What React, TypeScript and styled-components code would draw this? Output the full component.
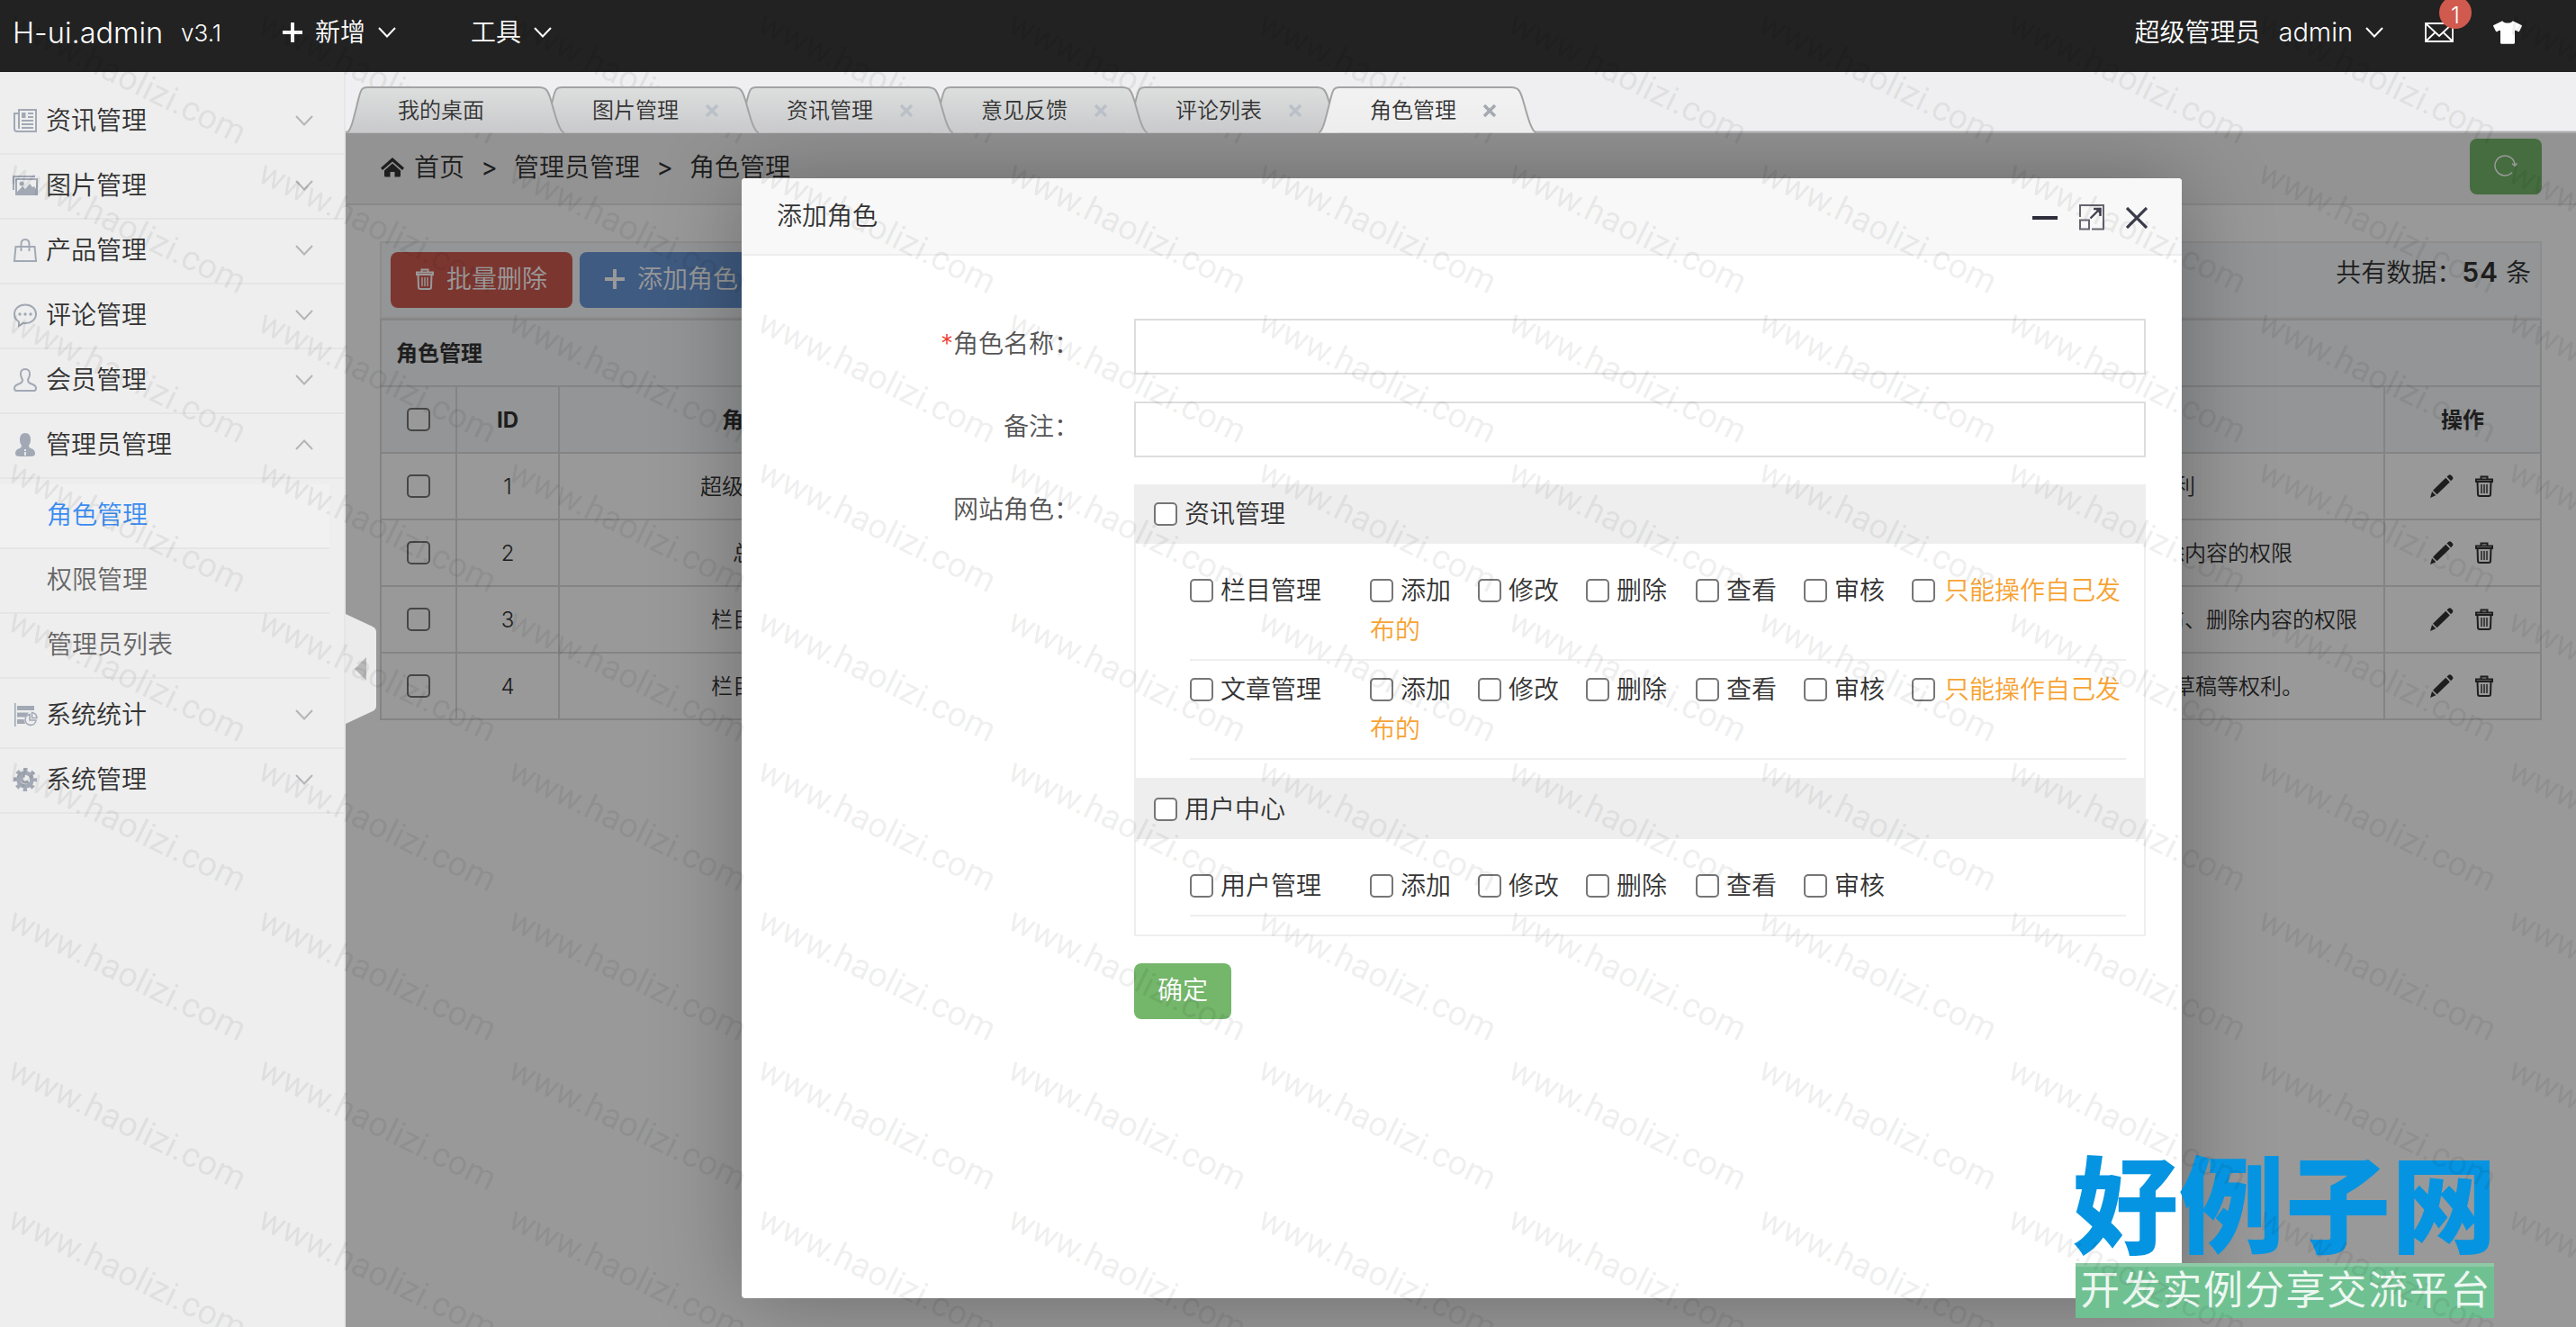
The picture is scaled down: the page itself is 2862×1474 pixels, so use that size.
import React from 'react'
import styled, { createGlobalStyle } from 'styled-components'
import { FaTshirt } from 'react-icons/fa'

const GlobalStyle = createGlobalStyle`
  * {
    box-sizing: border-box;
  }
  body {
    margin: 0;
    overflow: hidden;
    background: #fff;
    color: #333;
    font-family: Inter, 'Noto Sans CJK SC', sans-serif;
    font-size: 28px;
    font-weight: 350;
    line-height: 44px;
  }
  svg {
    display: block;
    flex: none;
  }
`

const Shell = styled.div`
  position: relative;
  display: flex;
  flex-direction: column;
  width: 2862px;
  height: 1474px;
  overflow: hidden;
`

/* ---------- header ---------- */

const Header = styled.header`
  display: flex;
  align-items: center;
  height: 80px;
  padding: 0 60px 8px 14px;
  background: #222;
  color: #fff;
`

const Logo = styled.span`
  width: 187px;
  padding-top: 2px;
  font-size: 32.5px;
`

const Version = styled.span`
  width: 113px;
  padding-top: 2px;
  font-size: 26px;
`

const NavItem = styled.div<{ $width?: number }>`
  display: flex;
  align-items: center;
  width: ${({ $width }) => ($width ? `${$width}px` : 'auto')};
  gap: 14px;
`

const HeaderRight = styled.div`
  display: flex;
  align-items: center;
  margin-left: auto;
`

const UserRole = styled.span`
  margin-right: 20px;
`

const UserName = styled.span`
  font-size: 29px;
`

const Message = styled.div`
  position: relative;
  margin: 0 44px 0 46px;
`

const Badge = styled.span`
  position: absolute;
  top: -29px;
  left: 16px;
  width: 36px;
  height: 36px;
  border-radius: 18px;
  background: #d05a4e;
  font-size: 25px;
  line-height: 42px;
  text-align: center;
`

/* ---------- sidebar ---------- */

const Body = styled.div`
  display: flex;
  flex: 1;
  min-height: 0;
`

const Sidebar = styled.aside`
  width: 384px;
  padding-top: 20px;
  border-right: 2px solid #e6e6e6;
  background: #eee;
`

const MenuItem = styled.div`
  display: flex;
  align-items: center;
  height: 72px;
  padding: 0 34px 2px 14px;
  border-bottom: 2px solid #e5e5e5;
  color: #333;
`

const MenuLabel = styled.span`
  flex: 1;
  margin-left: 9px;
`

const SubMenu = styled.div`
  width: 366px;
  padding: 6px 0;
`

const SubItem = styled.div<{ $active?: boolean }>`
  height: 72px;
  padding: 12px 0 0 52px;
  border-bottom: 2px solid #e5e5e5;
  background: ${({ $active }) => ($active ? '#f1f1f1' : 'transparent')};
  color: ${({ $active }) => ($active ? '#3b8cf0' : '#666')};
`

/* ---------- tabs ---------- */

const Main = styled.main`
  display: flex;
  flex: 1;
  flex-direction: column;
  min-width: 0;
`

const TabBar = styled.div`
  display: flex;
  height: 68px;
  padding: 16px 0 0 1px;
  border-bottom: 2px solid #acacac;
  background: #efeff1;
  box-shadow: inset 0 -1px 0 #d4d4d6;
`

const Tab = styled.div<{ $order: number }>`
  position: relative;
  z-index: ${({ $order }) => $order};
  display: flex;
  align-items: center;
  width: 242px;
  height: 52px;
  margin-right: -26px;
  padding: 2px 45px 0 57px;
  font-size: 24px;
`

const TabShape = styled.svg`
  position: absolute;
  top: 0;
  left: 0;
`

const TabLabel = styled.span`
  position: relative;
  flex: 1;
`

const TabClose = styled.svg`
  position: relative;
`

/* ---------- page under the tabs ---------- */

const Page = styled.div`
  position: relative;
  flex: 1;
  overflow: hidden;
  background: #fff;
`

const Breadcrumb = styled.nav`
  display: flex;
  align-items: center;
  height: 80px;
  padding: 0 38px 2px 39px;
  border-bottom: 2px solid #e5e5e5;
  background: #f5f5f5;
`

const Crumb = styled.span`
  margin-left: 11px;
`

const CrumbArrow = styled.span`
  width: 55px;
  text-align: center;
  font-weight: 400;

  & + ${Crumb} {
    margin-left: 0;
  }
`

const Button = styled.button<{ $color: string; $width: number }>`
  display: flex;
  align-items: center;
  justify-content: center;
  gap: 14px;
  width: ${({ $width }) => $width}px;
  height: 62px;
  padding: 0 0 2px;
  border: 0;
  border-radius: 8px;
  background: ${({ $color }) => $color};
  color: #fff;
  font: inherit;
`

const RefreshSlot = styled.div`
  margin: 0 0 2px auto;
`

const Content = styled.section`
  padding: 40px 38px;
`

const Toolbar = styled.div`
  display: flex;
  gap: 8px;
  height: 86px;
  padding: 10px;
  border: 2px solid #ececec;
  background: #f6f8fb;
`

const Total = styled.div`
  margin-left: auto;

  strong {
    font-size: 30px;
    font-weight: 600;
    letter-spacing: 1px;
  }
`

const Table = styled.table`
  width: 100%;
  table-layout: fixed;
  border-collapse: separate;
  border-spacing: 0;
  border-top: 2px solid #ddd;
  border-left: 2px solid #ddd;
  font-size: 24px;
`

const Cell = styled.td<{ $head?: boolean; $left?: boolean }>`
  height: 74px;
  padding: 2px 16px 0;
  border-right: 2px solid #ddd;
  border-bottom: 2px solid #ddd;
  background: ${({ $head }) => ($head ? '#f6f8fb' : '#fff')};
  font-weight: ${({ $head }) => ($head ? 700 : 350)};
  text-align: ${({ $left }) => ($left ? 'left' : 'center')};
`

const CellCenter = styled.div`
  display: flex;
  justify-content: center;
  align-items: center;
  gap: 24px;
  padding: 0 1px 3px 0;
`

const Check = styled.input.attrs({ type: 'checkbox' })`
  appearance: none;
  width: 26px;
  height: 26px;
  margin: 0;
  border: 2px solid #767676;
  border-radius: 5px;
  background: #fff;
`

const Mask = styled.div`
  position: absolute;
  inset: 0;
  background: rgba(0, 0, 0, 0.4);
`

const Handle = styled.div`
  position: absolute;
  top: 534px;
  left: 0;
`

/* ---------- dialog ---------- */

const Dialog = styled.div`
  position: absolute;
  top: 50px;
  left: 440px;
  width: 1600px;
  height: 1244px;
  border-radius: 4px;
  background: #fff;
  box-shadow: 2px 2px 100px rgba(0, 0, 0, 0.3);
`

const DialogHeader = styled.div`
  display: flex;
  align-items: center;
  height: 86px;
  padding: 0 38px 1px 39px;
  border-bottom: 2px solid #eee;
  border-radius: 4px 4px 0 0;
  background: #f8f8f8;
`

const DialogTools = styled.div`
  display: flex;
  align-items: center;
  gap: 24px;
  margin: 4px 0 0 auto;
`

const Form = styled.div`
  display: flex;
  flex-direction: column;
  gap: 30px;
  padding: 70px 40px 0 0;
`

const FormRow = styled.div`
  display: grid;
  grid-template-columns: 375px 1124px;
  column-gap: 61px;
`

const Label = styled.label`
  padding-top: 6px;
  color: #555;
  text-align: right;
`

const Required = styled.span`
  color: #f03b2d;
`

const TextInput = styled.input`
  width: 100%;
  height: 62px;
  border: 2px solid #ddd;
  background: transparent;
`

const PermissionBox = styled.div`
  border: 2px solid #eee;
`

const GroupTitle = styled.div<{ $first?: boolean }>`
  display: flex;
  align-items: center;
  height: ${({ $first }) => ($first ? 64 : 68)}px;
  padding: ${({ $first }) => ($first ? '0 20px 2px' : '2px 20px 0')};
  gap: 8px;
  background: #eee;
`

const GroupBody = styled.div`
  padding: 20px 20px 20px 60px;
`

const PermissionRow = styled.div`
  display: grid;
  grid-template-columns: 200px 1fr;
  padding: 10px 0;
  border-bottom: 2px solid #eee;

  ${Check} {
    margin-right: 8px;
    vertical-align: -3px;
  }
`

const Option = styled.label<{ $warn?: boolean }>`
  margin-right: 30px;
  color: ${({ $warn }) => ($warn ? '#f7a334' : 'inherit')};

  &:nth-child(3) {
    margin-right: 32px;
  }

  &:last-child {
    margin-right: 0;
  }

  && ${Check} {
    margin-right: ${({ $warn }) => ($warn ? 10 : 8)}px;
  }
`

/* ---------- marks over the page ---------- */

const Watermark = styled.div`
  position: absolute;
  top: 5px;
  left: 21px;
  display: grid;
  grid-template-columns: repeat(11, 277.8px);
  grid-auto-rows: 166px;
  color: rgba(0, 0, 0, 0.08);
  font-family: Roboto, sans-serif;
  font-size: 38px;
  font-weight: 400;
  pointer-events: none;

  span {
    width: 300px;
    height: 40px;
    line-height: 40px;
    transform: rotate(26deg);
    transform-origin: 0 0;
    white-space: nowrap;
  }
`

const Brand = styled.div`
  position: absolute;
  top: 1272px;
  left: 2303px;
  width: 470px;
`

const BrandName = styled.div`
  height: 131px;
  color: #0594e1;
  font-size: 117px;
  font-weight: 900;
  letter-spacing: 1px;
  line-height: 137px;
  white-space: nowrap;
`

const BrandSlogan = styled.div`
  width: 465px;
  height: 61px;
  margin-left: 3px;
  border-top: 4px solid #8ecaa6;
  background: #70c192;
  color: rgba(255, 255, 255, 0.88);
  font-size: 44px;
  font-weight: 400;
  letter-spacing: 1.7px;
  line-height: 52px;
  padding-left: 5px;
  white-space: nowrap;
`

/* ---------- icons ---------- */

const Chevron = ({ up, color = '#b4b5b7' }: { up?: boolean; color?: string }) => (
  <svg width="20" height="12" viewBox="0 0 20 12" fill="none" stroke={color} strokeWidth="2">
    <path d={up ? 'M1 11L10 1.5L19 11' : 'M1 1L10 10.5L19 1'} />
  </svg>
)

const PlusIcon = () => (
  <svg width="22" height="22" viewBox="0 0 22 22" stroke="currentColor" strokeWidth="4">
    <path d="M0 11H22M11 0V22" />
  </svg>
)

const TrashIcon = () => (
  <svg width="20" height="24" viewBox="0 0 20 24" fill="none" stroke="currentColor" strokeWidth="2">
    <path d="M6.5 4V1.500H13.500V4M1 4.500H19V7H1ZM2.500 7L3 21Q3 23 5 23H15Q17 23 17 21L17.500 7" />
    <path d="M7 10V20M10 10V20M13 10V20" strokeWidth="1.400" />
  </svg>
)

const PencilIcon = () => (
  <svg width="26" height="26" viewBox="0 0 26 26" fill="currentColor">
    <path d="M18.5 2.5L20.5 .8Q22 -.4 23.600 1.200L24.800 2.500Q26 4 24.700 5.500L23 7.200ZM17.300 3.800L21.800 8.400L7.600 22.200L3 17.700ZM2 19L6.300 23.200L0 26Z" />
  </svg>
)

const HomeIcon = () => (
  <svg width="26" height="22" viewBox="0 0 26 22" fill="currentColor">
    <path d="M13 0L26 11.500L24 14L13 4.500L2 14L0 11.500Z" />
    <path d="M13 6.500L22 14.500V20Q22 21.500 20.500 21.500H15.500V16H10.500V21.500H5.500Q4 21.500 4 20V14.500Z" />
  </svg>
)

const MailIcon = () => (
  <svg width="32" height="22" viewBox="0 0 32 22" fill="none" stroke="#fff" strokeWidth="1.8">
    <path d="M1 1H31V21H1ZM1 1L16 15L31 1M1 21L11.500 11M31 21L20.500 11" />
  </svg>
)

const RefreshIcon = () => (
  <svg width="26" height="26" viewBox="0 0 26 26" fill="none" stroke="#fff" strokeWidth="1.500">
    <path d="M20 20.500A11 11 0 1 1 23 12.500M20 10.500L23 13.500L25.500 10.500" />
  </svg>
)

const menuIcons: Record<string, React.ReactNode> = {
  news: (
    <g fill="none" stroke="#a2a9b5" strokeWidth="2">
      <path d="M7 2H26V26H5Q2 26 2 23V6H7ZM7 6V23" />
      <path d="M10 14H23M10 18H23M10 22H23M17 6H23M17 10H23" />
      <path d="M10 5H14.500V11H10Z" fill="#a2a9b5" stroke="none" />
    </g>
  ),
  image: (
    <g fill="none" stroke="#a2a9b5" strokeWidth="2">
      <path d="M1 19V4H25" />
      <path d="M4 7H27V24H4Z" />
      <path d="M5 23V21L11 15L14 18L19 12L22 16L24 15L26 18V23Z" fill="#a2a9b5" stroke="none" />
      <circle cx="10" cy="12" r="2.500" fill="#a2a9b5" stroke="none" />
    </g>
  ),
  product: (
    <g fill="none" stroke="#a2a9b5" strokeWidth="2">
      <path d="M3.500 10H24.500L26 26H2ZM9.500 15V7Q9.500 2 14 2Q18.500 2 18.500 7V15" />
    </g>
  ),
  comment: (
    <g fill="none" stroke="#a2a9b5" strokeWidth="2">
      <path d="M14 2.500C21 2.500 26 7 26 13C26 19 20.500 23 14 23L12 22.800L7 26L7 21.500C4 19.500 2 16.500 2 13C2 7 7 2.500 14 2.500Z" />
      <g fill="#a2a9b5" stroke="none">
        <circle cx="8" cy="13" r="1.700" />
        <circle cx="14" cy="13" r="1.700" />
        <circle cx="20" cy="13" r="1.700" />
      </g>
    </g>
  ),
  member: (
    <path
      d="M14 2C17.500 2 19.500 4.500 19 8C19 11 17.500 12 17 14Q17 17 20 18Q26 20 26 23Q26 26 24 26H4Q2 26 2 23Q2 20 8 18Q11 17 11 14C10.500 12 9 11 9 8C8.500 4.500 10.500 2 14 2Z"
      fill="none"
      stroke="#a2a9b5"
      strokeWidth="2"
    />
  ),
  admin: (
    <g>
      <path
        d="M14 1C18 1 20 4 20 8C20 12 19 13 18 15Q18 17 20 18Q25 19 25 24Q25 27 20 27H8Q3 27 3 24Q3 19 8 18Q10 17 10 15C9 13 8 12 8 8C8 4 10 1 14 1Z"
        fill="#a2a9b5"
      />
      <path d="M14 19V21M14 22V26" stroke="#eee" strokeWidth="1.800" />
    </g>
  ),
  stats: (
    <g>
      <path d="M2.800 1V27" stroke="#a2a9b5" strokeWidth="1.600" />
      <path d="M5 4H24V9H5ZM5 11.500H18L14 16.500H5ZM5 19H12.500L14 24H5Z" fill="#a2a9b5" />
      <path d="M19 13.500A6 6 0 1 0 26 20H19ZM21.500 11.500V17.500H27Q26.500 12 21.500 11.500Z" fill="none" stroke="#a2a9b5" strokeWidth="1.600" />
    </g>
  ),
  system: (
    <g>
      <circle cx="14" cy="14" r="7.500" fill="none" stroke="#a2a9b5" strokeWidth="4.500" />
      <circle cx="14" cy="14" r="11" fill="none" stroke="#a2a9b5" strokeWidth="4" strokeDasharray="4.320 4.320" strokeDashoffset="2.160" />
      <path d="M13.500 9Q9 10.500 10 14.500Q12.500 18 16 16.500L21 22" fill="none" stroke="#a2a9b5" strokeWidth="3" />
    </g>
  ),
}

const MenuIcon = ({ name }: { name: string }) => (
  <svg width="28" height="28" viewBox="0 0 28 28">
    {menuIcons[name]}
  </svg>
)

const TAB_PATH = 'M0 51.500C5 50 8 35 13 15C16 3 17 1 23 1H214C222 1 224 5 227 15C232 32 236 50 242 51.500'

/* ---------- data ---------- */

const menu = [
  { icon: 'news', label: '资讯管理' },
  { icon: 'image', label: '图片管理' },
  { icon: 'product', label: '产品管理' },
  { icon: 'comment', label: '评论管理' },
  { icon: 'member', label: '会员管理' },
  { icon: 'admin', label: '管理员管理', children: ['角色管理', '权限管理', '管理员列表'] },
  { icon: 'stats', label: '系统统计' },
  { icon: 'system', label: '系统管理' },
]

const tabs = ['我的桌面', '图片管理', '资讯管理', '意见反馈', '评论列表', '角色管理']

const roles = [
  { id: 1, name: '超级管理员', users: 'admin', desc: '拥有至高无上的权利' },
  { id: 2, name: '总编', users: '张三', desc: '具有添加、审核、发布、删除内容的权限' },
  { id: 3, name: '栏目主辑', users: '李四，王五', desc: '只对所在栏目具有添加、审核、发布、删除内容的权限' },
  { id: 4, name: '栏目编辑', users: '赵六，钱七', desc: '只对所在栏目具有添加、删除草稿等权利。' },
]

const actions = ['添加', '修改', '删除', '查看', '审核']

const groups = [
  {
    title: '资讯管理',
    rows: [
      { label: '栏目管理', own: true },
      { label: '文章管理', own: true },
    ],
  },
  { title: '用户中心', rows: [{ label: '用户管理', own: false }] },
]

const RoleTable = () => (
  <Table>
    <colgroup>
      <col width="84" />
      <col width="114" />
      <col width="434" />
      <col width="958" />
      <col />
      <col width="174" />
    </colgroup>
    <tbody>
      <tr>
        <Cell $head $left colSpan={6}>
          角色管理
        </Cell>
      </tr>
      <tr>
        <Cell $head>
          <CellCenter>
            <Check />
          </CellCenter>
        </Cell>
        <Cell $head>ID</Cell>
        <Cell $head>角色名</Cell>
        <Cell $head>用户列表</Cell>
        <Cell $head>描述</Cell>
        <Cell $head>操作</Cell>
      </tr>
      {roles.map(({ id, name, users, desc }) => (
        <tr key={id}>
          <Cell>
            <CellCenter>
              <Check />
            </CellCenter>
          </Cell>
          <Cell>{id}</Cell>
          <Cell>{name}</Cell>
          <Cell>{users}</Cell>
          <Cell>{desc}</Cell>
          <Cell>
            <CellCenter>
              <PencilIcon />
              <TrashIcon />
            </CellCenter>
          </Cell>
        </tr>
      ))}
    </tbody>
  </Table>
)

const RoleDialog = () => (
  <Dialog>
    <DialogHeader>
      添加角色
      <DialogTools>
        <svg width="28" height="4" viewBox="0 0 28 4">
          <path d="M0 2H28" stroke="#2e2d3c" strokeWidth="4" />
        </svg>
        <svg width="28" height="29" viewBox="0 0 28 29" fill="none" stroke="#66646f" strokeWidth="2">
          <path d="M1 14V1H27V27.500H14M1 17.500H11V27.500H1Z" />
          <path d="M12.500 15.500L22 6M16 5H23.500V13" stroke="#44424f" strokeWidth="2.400" />
          <path d="M18 5H23.500V11Z" fill="#44424f" stroke="none" />
        </svg>
        <svg width="24" height="24" viewBox="0 0 24 24" stroke="#3c3b49" strokeWidth="3.200">
          <path d="M1 1L23 23M23 1L1 23" />
        </svg>
      </DialogTools>
    </DialogHeader>
    <Form>
      <FormRow>
        <Label>
          <Required>*</Required>角色名称：
        </Label>
        <TextInput />
      </FormRow>
      <FormRow>
        <Label>备注：</Label>
        <TextInput />
      </FormRow>
      <FormRow>
        <Label>网站角色：</Label>
        <PermissionBox>
          {groups.map(({ title, rows }, index) => (
            <React.Fragment key={title}>
              <GroupTitle $first={index === 0}>
                <Check />
                {title}
              </GroupTitle>
              <GroupBody>
                {rows.map(({ label, own }) => (
                  <PermissionRow key={label}>
                    <label>
                      <Check />
                      {label}
                    </label>
                    <div>
                      {actions.map((action) => (
                        <Option key={action}>
                          <Check />
                          {action}
                        </Option>
                      ))}
                      {own && (
                        <Option $warn>
                          <Check />
                          只能操作自己发布的
                        </Option>
                      )}
                    </div>
                  </PermissionRow>
                ))}
              </GroupBody>
            </React.Fragment>
          ))}
        </PermissionBox>
      </FormRow>
      <FormRow>
        <span />
        <Button $color="#74b66a" $width={108}>
          确定
        </Button>
      </FormRow>
    </Form>
  </Dialog>
)

const App: React.FC = () => {
  const lastTab = tabs.length - 1

  return (
    <Shell>
      <GlobalStyle />
      <Header>
        <Logo>H-ui.admin</Logo>
        <Version>v3.1</Version>
        <NavItem $width={209}>
          <PlusIcon />
          新增
          <Chevron color="#fff" />
        </NavItem>
        <NavItem>
          工具
          <Chevron color="#fff" />
        </NavItem>
        <HeaderRight>
          <UserRole>超级管理员</UserRole>
          <NavItem>
            <UserName>admin</UserName>
            <Chevron color="#fff" />
          </NavItem>
          <Message>
            <MailIcon />
            <Badge>1</Badge>
          </Message>
          <FaTshirt size={32} />
        </HeaderRight>
      </Header>

      <Body>
        <Sidebar>
          {menu.map(({ icon, label, children }) => (
            <React.Fragment key={label}>
              <MenuItem>
                <MenuIcon name={icon} />
                <MenuLabel>{label}</MenuLabel>
                <Chevron up={!!children} />
              </MenuItem>
              {children && (
                <SubMenu>
                  {children.map((item, index) => (
                    <SubItem key={item} $active={index === 0}>
                      {item}
                    </SubItem>
                  ))}
                </SubMenu>
              )}
            </React.Fragment>
          ))}
        </Sidebar>

        <Main>
          <TabBar>
            {tabs.map((tab, index) => {
              const active = index === lastTab
              return (
                <Tab key={tab} $order={active ? 10 : lastTab - index}>
                  <TabShape width="242" height="52" viewBox="0 0 242 52">
                    <defs>
                      <linearGradient id={`tab${index}`} x1="0" y1="0" x2="0" y2="1">
                        <stop offset="0" stopColor={active ? '#f2f2f2' : '#dddfde'} />
                        <stop offset="1" stopColor={active ? '#ededee' : '#c9c9cb'} />
                      </linearGradient>
                    </defs>
                    <path d={TAB_PATH} fill={`url(#tab${index})`} stroke="#a3a3a3" strokeWidth="2" />
                  </TabShape>
                  <TabLabel>{tab}</TabLabel>
                  {index > 0 && (
                    <TabClose width="14" height="14" viewBox="0 0 14 14" stroke={active ? '#a5a9b0' : '#bac0c8'} strokeWidth="3.500">
                      <path d="M1 1L13 13M13 1L1 13" />
                    </TabClose>
                  )}
                </Tab>
              )
            })}
          </TabBar>

          <Page>
            <Breadcrumb>
              <HomeIcon />
              <Crumb>首页</Crumb>
              <CrumbArrow>&gt;</CrumbArrow>
              <Crumb>管理员管理</Crumb>
              <CrumbArrow>&gt;</CrumbArrow>
              <Crumb>角色管理</Crumb>
              <RefreshSlot>
                <Button $color="#74b66a" $width={80}>
                  <RefreshIcon />
                </Button>
              </RefreshSlot>
            </Breadcrumb>
            <Content>
              <Toolbar>
                <Button $color="#cf5b51" $width={202}>
                  <TrashIcon />
                  批量删除
                </Button>
                <Button $color="#6a98d8" $width={204}>
                  <PlusIcon />
                  添加角色
                </Button>
                <Total>
                  共有数据：<strong>54</strong> 条
                </Total>
              </Toolbar>
              <RoleTable />
            </Content>
            <Mask />
            <Handle>
              <svg width="34" height="122" viewBox="0 0 34 122">
                <path d="M0 0L30 14Q34 16 34 20V102Q34 106 30 108L0 122Z" fill="#ebebeb" />
                <path d="M10 61L23 48V74Z" fill="#b8b8b8" />
              </svg>
            </Handle>
            <RoleDialog />
          </Page>
        </Main>
      </Body>

      <Brand>
        <BrandName>好例子网</BrandName>
        <BrandSlogan>开发实例分享交流平台</BrandSlogan>
      </Brand>
      <Watermark>
        {Array.from({ length: 99 }, (_, index) => (
          <span key={index}>www.haolizi.com</span>
        ))}
      </Watermark>
    </Shell>
  )
}

export default App
